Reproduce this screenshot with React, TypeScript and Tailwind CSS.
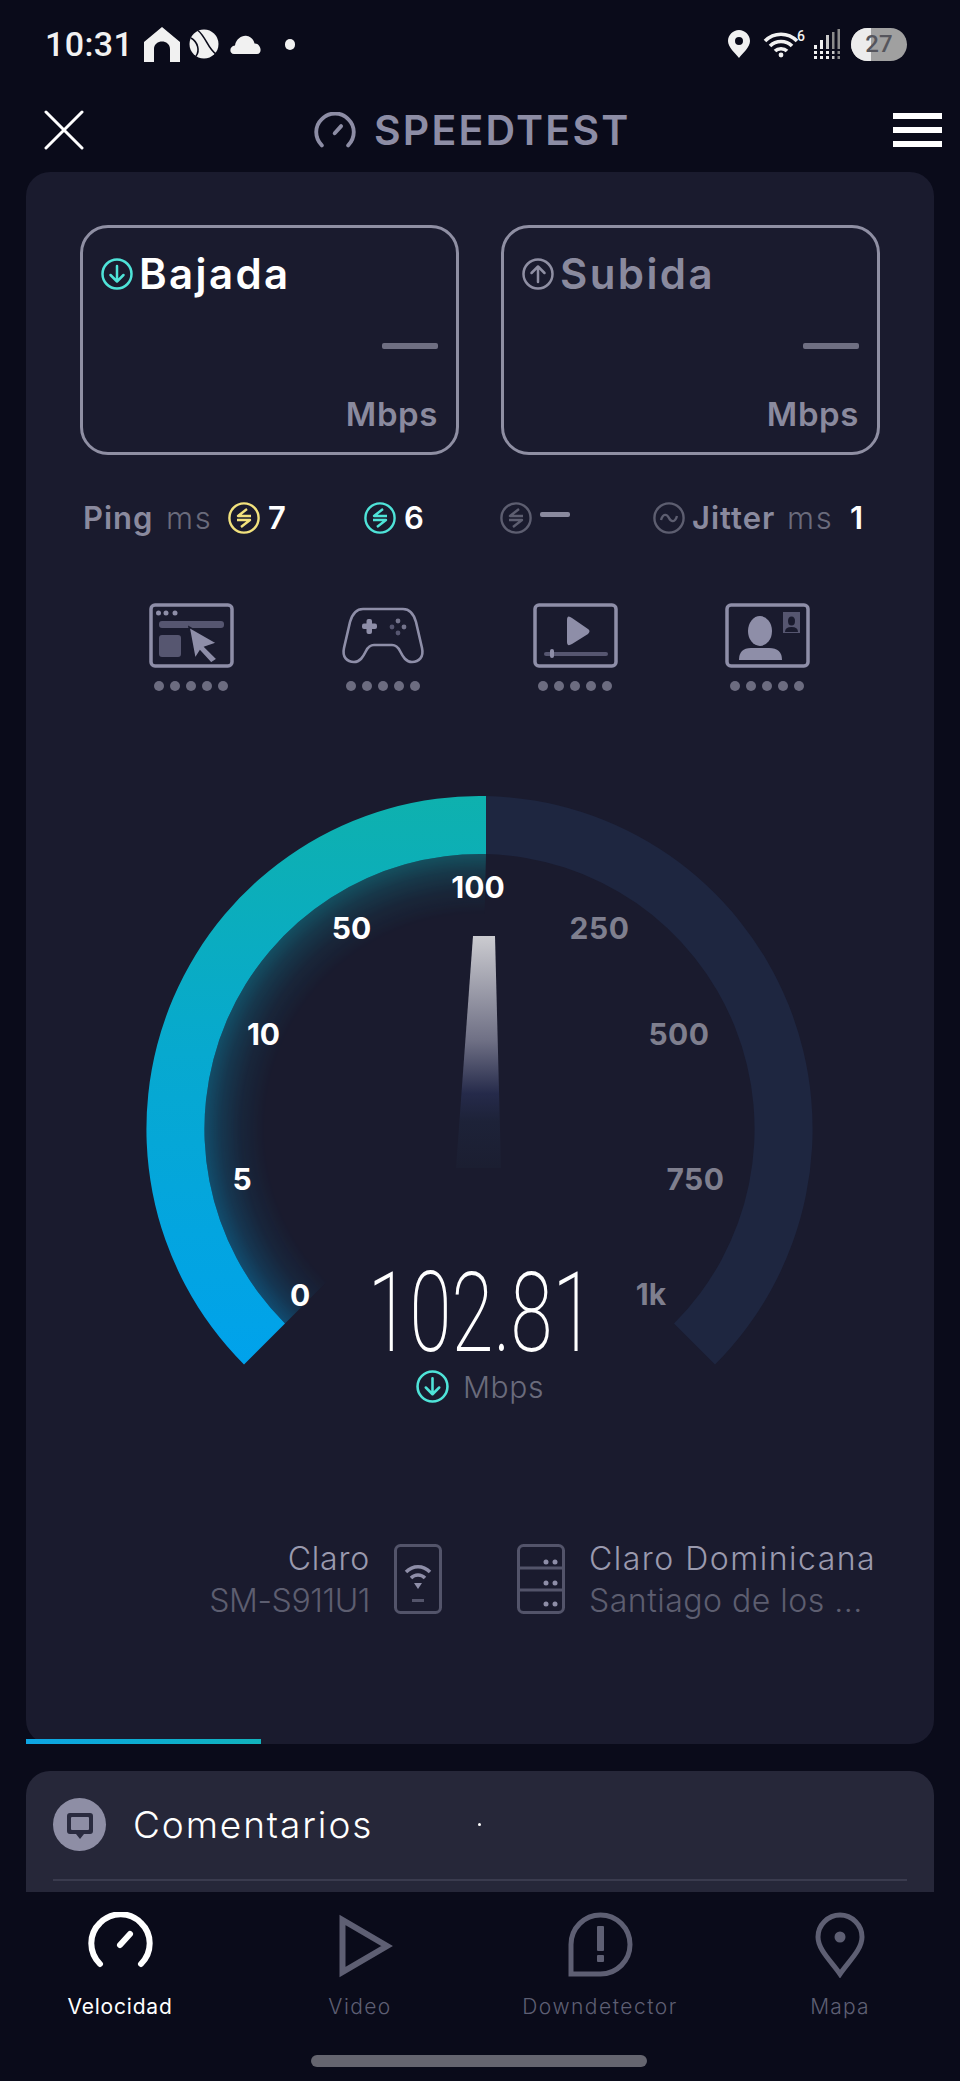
import React from "react";

const font = "font-['Inter','Liberation_Sans',sans-serif]";

function PingIcon({ color }: { color: string }) {
  return (
    <svg width="32" height="32" viewBox="0 0 32 32" fill="none" stroke={color} strokeWidth="2.4" className="shrink-0">
      <circle cx="16" cy="16" r="14.6" />
      <path d="M19 7 L10 14 H23 M9 18 H22 L13 25" strokeLinejoin="round" />
    </svg>
  );
}

function ArrowIcon({ color, up, size = 32 }: { color: string; up?: boolean; size?: number }) {
  return (
    <svg width={size} height={size} viewBox="0 0 32 32" fill="none" stroke={color} strokeWidth="2.5" strokeLinecap="round" strokeLinejoin="round">
      <circle cx="16" cy="16" r="14.5" />
      {up ? <path d="M16 24 V9 M9.5 15 L16 8.5 L22.5 15" /> : <path d="M16 8 V23 M9.5 17 L16 23.5 L22.5 17" />}
    </svg>
  );
}

function SpeedIcon({ color, w, h, sw }: { color: string; w: number; h: number; sw: number }) {
  return (
    <svg width={w} height={h} viewBox="0 0 65 56" fill="none" stroke={color} strokeWidth={sw} strokeLinecap="round">
      <path d="M12 52 A29 29 0 1 1 53 52" />
      <path d="M32 33 L42 22" />
    </svg>
  );
}

function WebIcon() {
  return (
    <svg width="85" height="65" viewBox="0 0 85 65" fill="none">
      <rect x="2" y="2" width="81" height="61" rx="4" stroke="#8e8ea8" strokeWidth="3.5" />
      <circle cx="9.5" cy="10" r="2.5" fill="#8e8ea8" />
      <circle cx="17" cy="10" r="2.5" fill="#8e8ea8" />
      <circle cx="26" cy="10" r="2.5" fill="#8e8ea8" />
      <rect x="10" y="18" width="65" height="7" rx="3" fill="#565670" />
      <rect x="10" y="32" width="22" height="22" rx="3" fill="#565670" />
      <path d="M40 24 L68 40 L56 44 L68 56 L62 60 L51 48 L46 56 Z" fill="#8e8ea8" stroke="#1a1b2e" strokeWidth="1.5" />
    </svg>
  );
}

function GameIcon() {
  return (
    <svg width="84" height="60" viewBox="0 0 84 60" fill="none">
      <path d="M22 3 H62 C70 3 73 9 75 16 L81 42 C83 51 78 56 71 56 C65 56 62 51 59 45 C57 41 55 39 51 39 H33 C29 39 27 41 25 45 C22 51 19 56 13 56 C6 56 1 51 3 42 L9 16 C11 9 14 3 22 3 Z" stroke="#8e8ea8" strokeWidth="2.6" />
      <rect x="25.5" y="13" width="5.5" height="15" rx="2" fill="#8e8ea8" />
      <rect x="21" y="17.5" width="15" height="5.5" rx="2" fill="#8e8ea8" />
      <circle cx="57" cy="15" r="2.4" fill="#74748c" />
      <circle cx="57" cy="27" r="2.4" fill="#565670" />
      <circle cx="51" cy="21" r="2.4" fill="#565670" />
      <circle cx="63" cy="21" r="2.4" fill="#74748c" />
    </svg>
  );
}

function VideoIcon() {
  return (
    <svg width="85" height="65" viewBox="0 0 85 65" fill="none">
      <rect x="2" y="2" width="81" height="61" rx="4" stroke="#8e8ea8" strokeWidth="3.5" />
      <path d="M34 17 Q34 11 39 15 L55 26 Q58 28 55 31 L39 41 Q34 44 34 39 Z" fill="#8e8ea8" />
      <rect x="11" y="49" width="64" height="4" rx="2" fill="#565670" />
      <rect x="17" y="46" width="4" height="9" rx="2" fill="#8e8ea8" />
    </svg>
  );
}

function PersonIcon() {
  return (
    <svg width="85" height="65" viewBox="0 0 85 65" fill="none">
      <rect x="2" y="2" width="81" height="61" rx="4" stroke="#8e8ea8" strokeWidth="3.5" />
      <ellipse cx="35" cy="28" rx="12" ry="15" fill="#8e8ea8" />
      <path d="M14 57 Q14 45 26 45 H44 Q57 45 57 57 Z" fill="#8e8ea8" />
      <rect x="58" y="9" width="17" height="21" fill="#565670" />
      <ellipse cx="66.5" cy="18" rx="3.5" ry="4.5" fill="#1a1b2e" />
      <path d="M60 29 Q60 24 66.5 24 Q73 24 73 29 Z" fill="#1a1b2e" />
    </svg>
  );
}

function Dots() {
  return (
    <div className="flex justify-center gap-[6px] mt-[13px]">
      <span className="w-[10px] h-[10px] rounded-full bg-[#6c6c80]" />
      <span className="w-[10px] h-[10px] rounded-full bg-[#6c6c80]" />
      <span className="w-[10px] h-[10px] rounded-full bg-[#6c6c80]" />
      <span className="w-[10px] h-[10px] rounded-full bg-[#6c6c80]" />
      <span className="w-[10px] h-[10px] rounded-full bg-[#6c6c80]" />
    </div>
  );
}

function Gauge() {
  return (
    <div className="relative w-[700px] h-[640px] ml-[104px] mt-[89px] shrink-0">
      <svg width="700" height="640" viewBox="130 780 700 640" className="block">
        <defs>
          <linearGradient id="arc" gradientUnits="userSpaceOnUse" x1="0" y1="796" x2="0" y2="1366">
            <stop offset="0" stopColor="#0eb1ae" />
            <stop offset="0.45" stopColor="#07a9cf" />
            <stop offset="1" stopColor="#00a2ec" />
          </linearGradient>
          <radialGradient id="fade" gradientUnits="userSpaceOnUse" cx="479.5" cy="1129" r="275">
            <stop offset="0.78" stopColor="#fff" stopOpacity="0" />
            <stop offset="0.87" stopColor="#fff" stopOpacity="0.08" />
            <stop offset="0.94" stopColor="#fff" stopOpacity="0.2" />
            <stop offset="1" stopColor="#fff" stopOpacity="0.36" />
          </radialGradient>
          <mask id="glow" maskUnits="userSpaceOnUse" x="130" y="780" width="700" height="640">
            <rect x="130" y="780" width="700" height="640" fill="url(#fade)" />
          </mask>
          <linearGradient id="needle" gradientUnits="userSpaceOnUse" x1="0" y1="936" x2="0" y2="1168">
            <stop offset="0" stopColor="#cbcbd0" />
            <stop offset="0.45" stopColor="#6f7085" />
            <stop offset="0.68" stopColor="#252a4a" />
            <stop offset="0.8" stopColor="#1d2238" />
            <stop offset="1" stopColor="#1b1e31" />
          </linearGradient>
        </defs>
        <path d="M486 796.06 A333 333 0 0 1 715 1364.5 L674 1323.5 A275 275 0 0 0 486 854.1 Z" fill="#1e2640" />
        <path d="M285 1323.5 A275 275 0 0 1 486 854.1 L479.5 1129 Z" fill="url(#arc)" mask="url(#glow)" />
        <path d="M244 1364.5 A333 333 0 0 1 486 796.06 L486 854.1 A275 275 0 0 0 285 1323.5 Z" fill="url(#arc)" />
        <polygon points="473,936 495,936 501,1168 456,1168" fill="url(#needle)" />
      </svg>
      <span className="absolute left-[348px] top-[107px] -translate-x-1/2 -translate-y-1/2 text-[30px] font-bold text-white leading-none">100</span>
      <span className="absolute left-[221.5px] top-[148px] -translate-x-1/2 -translate-y-1/2 text-[30px] font-bold text-white leading-none">50</span>
      <span className="absolute left-[133.5px] top-[254px] -translate-x-1/2 -translate-y-1/2 text-[30px] font-bold text-white leading-none">10</span>
      <span className="absolute left-[112px] top-[399px] -translate-x-1/2 -translate-y-1/2 text-[30px] font-bold text-white leading-none">5</span>
      <span className="absolute left-[170px] top-[515px] -translate-x-1/2 -translate-y-1/2 text-[30px] font-bold text-white leading-none">0</span>
      <span className="absolute left-[469.5px] top-[148px] -translate-x-1/2 -translate-y-1/2 text-[30px] font-bold tracking-[0.5px] text-[#7f7f8e] leading-none">250</span>
      <span className="absolute left-[549px] top-[254px] -translate-x-1/2 -translate-y-1/2 text-[30px] font-bold tracking-[0.5px] text-[#7f7f8e] leading-none">500</span>
      <span className="absolute left-[565.5px] top-[399px] -translate-x-1/2 -translate-y-1/2 text-[30px] font-bold tracking-[0.5px] text-[#7f7f8e] leading-none">750</span>
      <span className="absolute left-[521px] top-[514px] -translate-x-1/2 -translate-y-1/2 text-[30px] font-bold text-[#7f7f8e] leading-none">1k</span>
      <span className="absolute left-[350.5px] top-[533px] -translate-x-1/2 -translate-y-1/2 scale-x-[0.68] text-[112px] font-extralight text-white leading-[84px] whitespace-nowrap font-['Roboto',sans-serif]">102.81</span>
      <div className="absolute left-[286px] top-[590px] flex items-center gap-[14px]">
        <ArrowIcon color="#4fe3d8" size={33} />
        <span className="text-[30px] font-light tracking-[0.6px] text-[#6a6b7c] leading-none">Mbps</span>
      </div>
    </div>
  );
}

export default function App() {
  return (
    <div className={`w-[960px] h-[2081px] overflow-hidden bg-[#0a0b1a] flex flex-col ${font}`}>
      {/* Status bar */}
      <div className="h-[88px] flex items-center pl-[45px] shrink-0">
        <span className="w-[85px] text-[34px] font-medium text-[#f1f1f1] leading-none tracking-[0.4px] whitespace-nowrap font-['Roboto',sans-serif]">10:31</span>
        <svg width="36" height="35" viewBox="0 0 36 35" className="ml-[14px]" fill="#f1f1f1">
          <path fillRule="evenodd" d="M18 0 L36 15 V35 H26 V22 C26 12 10 12 10 22 V35 H0 V15 Z" />
        </svg>
        <svg width="30" height="30" viewBox="0 0 30 30" className="ml-[9px]">
          <circle cx="15" cy="15" r="14.5" fill="#f1f1f1" />
          <path d="M9 1.5 C17 8 19 20 27 25 M2 9 C9 13 11 22 7 27" fill="none" stroke="#0a0b1a" strokeWidth="1.6" />
        </svg>
        <svg width="32" height="19" viewBox="0 0 32 19" className="ml-[11px]" fill="#f1f1f1">
          <path d="M4 19 C-1 19 -1 11 5 10.5 C6 4 12 0 17 1 C21 1.5 24 5 24.5 8.5 C31 8 33 19 27 19 Z" />
        </svg>
        <span className="w-[10px] h-[11px] rounded-full bg-[#f1f1f1] ml-[23px]" />
        <svg width="22" height="28" viewBox="0 0 22 28" className="ml-[433px]">
          <path fillRule="evenodd" d="M11 0 C17 0 22 5 22 11 C22 17 15 23 11 28 C7 23 0 17 0 11 C0 5 5 0 11 0 Z M11 7 A4 4 0 1 0 11 15 A4 4 0 1 0 11 7 Z" fill="#f1f1f1" />
        </svg>
        <div className="relative ml-[13px] w-[44px] h-[28px]">
          <svg width="36" height="28" viewBox="0 0 36 28" fill="none" stroke="#f1f1f1" strokeWidth="3.6">
            <path d="M2 11 C11 2 25 2 34 11 M7 16 C13 10 23 10 29 16 M12 21 C15 18 21 18 24 21" />
            <circle cx="18" cy="25" r="2.4" fill="#f1f1f1" stroke="none" />
          </svg>
          <span className="absolute left-[34px] -top-[1px] text-[14px] font-medium text-[#f1f1f1] leading-none font-['Roboto',sans-serif]">6</span>
        </div>
        <svg width="29" height="30" viewBox="0 0 29 30" className="ml-[6px]" fill="#f1f1f1">
          <rect x="1" y="16" width="3" height="4" />
          <rect x="7" y="11" width="3" height="9" />
          <rect x="13" y="6" width="3" height="14" fill="#c8c8c8" />
          <rect x="19" y="3" width="2.5" height="17" fill="#8a8a8a" />
          <rect x="24.5" y="0" width="2.5" height="20" fill="#8a8a8a" />
          <rect x="1" y="22" width="3" height="3" />
          <rect x="7" y="22" width="3" height="3" />
          <rect x="13" y="22" width="3" height="3" />
          <rect x="19" y="22" width="2.5" height="3" fill="#c8c8c8" />
          <rect x="24.5" y="22" width="2.5" height="3" fill="#8a8a8a" />
          <rect x="1" y="27" width="3" height="3" />
          <rect x="7" y="27" width="3" height="3" />
          <rect x="13" y="27" width="3" height="3" />
          <rect x="19" y="27" width="2.5" height="3" fill="#c8c8c8" />
          <rect x="24.5" y="27" width="2.5" height="3" fill="#8a8a8a" />
        </svg>
        <div className="relative ml-[9px] w-[56px] h-[33px] rounded-full bg-[#a0a0a0] overflow-hidden flex items-center justify-center">
          <span className="absolute left-0 top-0 w-[20px] h-full bg-[#ececec]" />
          <span className="relative text-[24px] font-medium text-[#55555c] leading-none font-['Roboto',sans-serif]">27</span>
        </div>
      </div>

      {/* Header */}
      <div className="h-[84px] shrink-0 flex items-center pl-[44px] pr-[18px]">
        <svg width="40" height="40" viewBox="0 0 40 40" fill="none" stroke="#ffffff" strokeWidth="3" strokeLinecap="round">
          <path d="M2 2 L38 38 M38 2 L2 38" />
        </svg>
        <div className="ml-[230px] flex items-center gap-[18px]">
          <SpeedIcon color="#8d8da5" w={42} h={36} sw={6} />
          <span className="text-[41px] font-semibold tracking-[2.2px] text-[#8d8da5] leading-none">SPEEDTEST</span>
        </div>
        <div className="ml-auto w-[49px] flex flex-col gap-[8px]">
          <span className="h-[6px] bg-white" />
          <span className="h-[6px] bg-white" />
          <span className="h-[6px] bg-white" />
        </div>
      </div>

      {/* Main card */}
      <div className="mx-[26px] h-[1572px] shrink-0 rounded-[24px] bg-[#1a1b2e] flex flex-col">
        <div className="flex gap-[42px] pl-[54px] mt-[53px]">
          <div className="w-[379px] h-[230px] rounded-[28px] border-[3px] border-[#8f8fa3] flex flex-col px-[18px]">
            <div className="flex items-center gap-[6px] mt-[25px]">
              <ArrowIcon color="#4fe3d8" />
              <span className="text-[42px] font-semibold tracking-[2.4px] text-white leading-none">Bajada</span>
            </div>
            <span className="self-end w-[56px] h-[6px] rounded-[2px] bg-[#6f6f82] mt-[48px]" />
            <span className="self-end text-[33px] font-semibold tracking-[0.6px] text-[#8a8a9e] leading-none mt-[49px]">Mbps</span>
          </div>
          <div className="w-[379px] h-[230px] rounded-[28px] border-[3px] border-[#8f8fa3] flex flex-col px-[18px]">
            <div className="flex items-center gap-[6px] mt-[25px]">
              <ArrowIcon color="#8f8fa3" up />
              <span className="text-[42px] font-semibold tracking-[2.4px] text-[#8a8a9e] leading-none">Subida</span>
            </div>
            <span className="self-end w-[56px] h-[6px] rounded-[2px] bg-[#6f6f82] mt-[48px]" />
            <span className="self-end text-[33px] font-semibold tracking-[0.6px] text-[#8a8a9e] leading-none mt-[49px]">Mbps</span>
          </div>
        </div>

        <div className="flex items-center h-[45px] mt-[40px] pl-[57px] text-[31px] leading-none whitespace-nowrap">
          <span className="w-[83px] font-semibold tracking-[1px] text-[#8a8a9e]">Ping</span>
          <span className="w-[62px] font-light tracking-[1.8px] text-[#6a6b7c]">ms</span>
          <PingIcon color="#f2e27d" />
          <span className="w-[96px] ml-[8px] font-semibold text-white">7</span>
          <PingIcon color="#4fe3d8" />
          <span className="w-[96px] ml-[8px] font-semibold text-white">6</span>
          <PingIcon color="#5d5e70" />
          <span className="w-[30px] h-[5px] rounded-[2px] bg-[#8a8a9e] ml-[8px] -mt-[6px]" />
          <svg width="32" height="32" viewBox="0 0 32 32" fill="none" stroke="#5d5e70" strokeWidth="2.4" className="ml-[83px] shrink-0">
            <circle cx="16" cy="16" r="14.6" />
            <path d="M8 18 C10 11 14 12 16 16 C18 20 22 21 24 14" />
          </svg>
          <span className="w-[95px] ml-[7px] font-semibold tracking-[1px] text-[#8a8a9e]">Jitter</span>
          <span className="w-[63px] font-light tracking-[1.8px] text-[#6a6b7c]">ms</span>
          <span className="font-semibold text-white">1</span>
        </div>

        <div className="flex pl-[69px] mt-[63px]">
          <div className="w-[192px] flex flex-col items-center"><div className="h-[65px] flex items-center"><WebIcon /></div><Dots /></div>
          <div className="w-[192px] flex flex-col items-center"><div className="h-[65px] flex items-center"><GameIcon /></div><Dots /></div>
          <div className="w-[192px] flex flex-col items-center"><div className="h-[65px] flex items-center"><VideoIcon /></div><Dots /></div>
          <div className="w-[192px] flex flex-col items-center"><div className="h-[65px] flex items-center"><PersonIcon /></div><Dots /></div>
        </div>

        <Gauge />

        <div className="flex mt-[124px] h-[70px]">
          <div className="w-[344px] -mt-[6px] flex flex-col items-end text-[32px] font-light leading-[42px]">
            <span className="tracking-[0.8px] text-[#9a9aae]">Claro</span>
            <span className="tracking-[-0.4px] text-[#5d5e70] whitespace-nowrap">SM-S911U1</span>
          </div>
          <svg width="48" height="70" viewBox="0 0 48 70" fill="none" className="ml-[24px]">
            <rect x="1.5" y="1.5" width="45" height="67" rx="5" stroke="#53546a" strokeWidth="3" />
            <path d="M12 28 C19 21 29 21 36 28 M17 34 C21 30 27 30 31 34" stroke="#8e8ea8" strokeWidth="3.5" />
            <path d="M20 39 H28 L24 45 Z" fill="#8e8ea8" />
            <rect x="18" y="55" width="12" height="3" fill="#53546a" />
          </svg>
          <svg width="48" height="70" viewBox="0 0 48 70" fill="none" className="ml-[75px]">
            <rect x="1.5" y="1.5" width="45" height="67" rx="5" stroke="#53546a" strokeWidth="3" />
            <path d="M1.5 24 H46.5 M1.5 46 H46.5" stroke="#53546a" strokeWidth="3" />
            <circle cx="29" cy="18" r="2.5" fill="#8e8ea8" /><circle cx="38" cy="18" r="2.5" fill="#8e8ea8" />
            <circle cx="29" cy="39" r="2.5" fill="#8e8ea8" /><circle cx="38" cy="39" r="2.5" fill="#8e8ea8" />
            <circle cx="29" cy="60" r="2.5" fill="#8e8ea8" /><circle cx="38" cy="60" r="2.5" fill="#8e8ea8" />
          </svg>
          <div className="ml-[24px] -mt-[6px] flex flex-col text-[32px] font-light leading-[42px] whitespace-nowrap">
            <span className="tracking-[1.5px] text-[#9a9aae]">Claro Dominicana</span>
            <span className="tracking-[0.5px] text-[#5d5e70]">Santiago de los ...</span>
          </div>
        </div>

        <div className="mt-auto w-[235px] h-[5px] bg-gradient-to-r from-[#0ea5e4] to-[#12b3bd]" />
      </div>

      {/* Comments */}
      <div className="mx-[26px] mt-[27px] h-[121px] shrink-0 rounded-t-[24px] bg-[#262739] flex flex-col px-[27px]">
        <div className="flex items-center mt-[27px] relative">
          <div className="w-[53px] h-[53px] rounded-full bg-[#8e8ea5] flex items-center justify-center">
            <svg width="30" height="30" viewBox="0 0 30 30" fill="none">
              <path d="M5 3 H25 Q28 3 28 6 V21 Q28 24 25 24 H19 L15 29 L11 24 H5 Q2 24 2 21 V6 Q2 3 5 3 Z" fill="#2a2b3f" />
              <rect x="6" y="7" width="18" height="13" rx="1" fill="#8e8ea5" />
            </svg>
          </div>
          <span className="text-[37px] font-light tracking-[1.9px] text-white leading-none ml-[27px]">Comentarios</span>
          <span className="absolute left-[425px] top-[25px] w-[3px] h-[3px] rounded-full bg-white" />
        </div>
        <div className="h-[2px] bg-[#3a3b4e] mt-auto mb-[11px]" />
      </div>

      {/* Tabs */}
      <div className="flex pt-[20px] shrink-0">
        <div className="w-1/4 flex flex-col items-center">
          <div className="h-[65px]"><SpeedIcon color="#ffffff" w={65} h={56} sw={6} /></div>
          <span className="text-[21px] tracking-[0.8px] leading-[30px] mt-[15px] text-white">Velocidad</span>
        </div>
        <div className="w-1/4 flex flex-col items-center">
          <div className="h-[65px] pl-[12px]">
            <svg width="54" height="64" viewBox="0 0 54 64" fill="none" className="mt-[2px]">
              <path d="M3.5 6 V58 L48 32 Z" stroke="#5e5f73" strokeWidth="6" />
            </svg>
          </div>
          <span className="text-[21px] font-light tracking-[1.4px] leading-[30px] mt-[15px] text-[#5e5f73]">Video</span>
        </div>
        <div className="w-1/4 flex flex-col items-center">
          <div className="h-[65px]">
            <svg width="65" height="65" viewBox="0 0 65 65" fill="none">
              <path d="M3 62 V32.5 A29.5 29.5 0 1 1 32.5 62 Z" stroke="#5e5f73" strokeWidth="5" />
              <rect x="29" y="14" width="7" height="25" rx="1" fill="#5e5f73" />
              <rect x="29" y="43" width="7" height="7" rx="1" fill="#5e5f73" />
            </svg>
          </div>
          <span className="text-[21px] font-light tracking-[1.5px] leading-[30px] mt-[15px] text-[#5e5f73]">Downdetector</span>
        </div>
        <div className="w-1/4 flex flex-col items-center">
          <div className="h-[65px]">
            <svg width="50" height="66" viewBox="0 0 50 66" fill="none">
              <path d="M25 3 C37 3 47 13 47 25 C47 38 33 50 25 62 C17 50 3 38 3 25 C3 13 13 3 25 3 Z" stroke="#5e5f73" strokeWidth="5" />
              <circle cx="25" cy="25" r="5.5" fill="#5e5f73" />
            </svg>
          </div>
          <span className="text-[21px] font-light tracking-[1.2px] leading-[30px] mt-[15px] text-[#5e5f73]">Mapa</span>
        </div>
      </div>

      <div className="mt-[33px] ml-[311px] w-[336px] h-[12px] rounded-full bg-[#65656f] shrink-0" />
    </div>
  );
}
